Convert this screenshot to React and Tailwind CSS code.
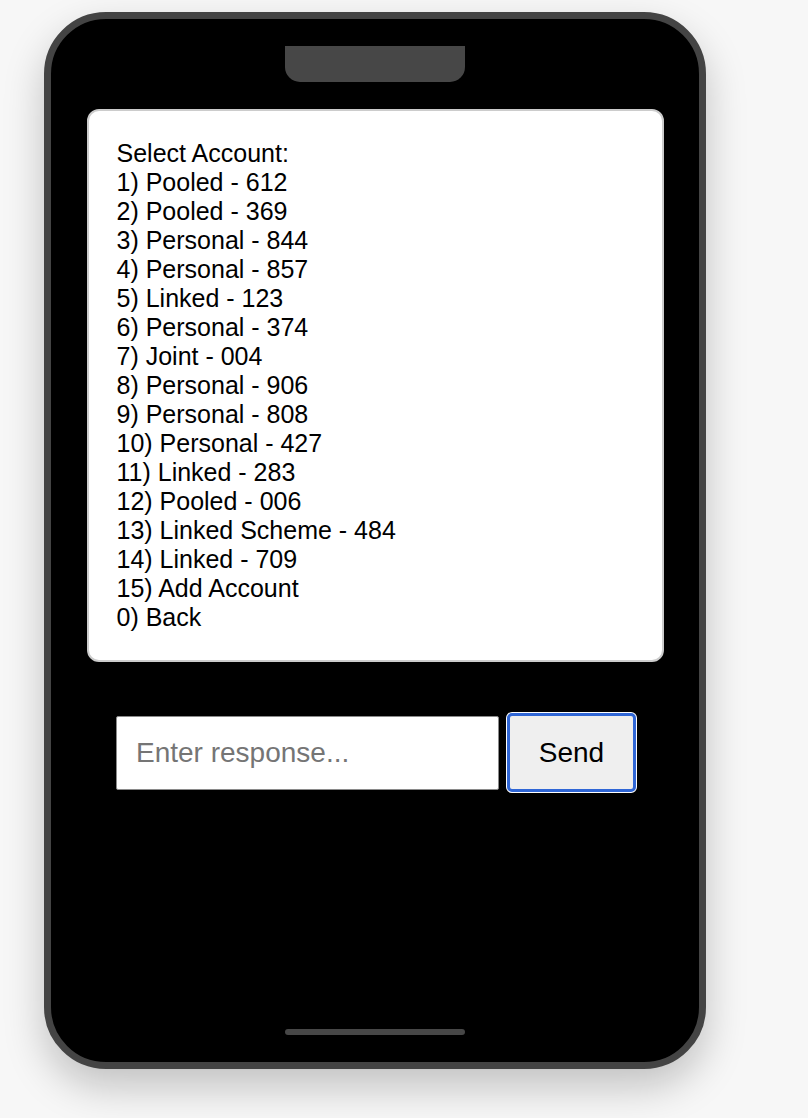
export default function App() {
  const lines = [
    "Select Account:",
    "1) Pooled - 612",
    "2) Pooled - 369",
    "3) Personal - 844",
    "4) Personal - 857",
    "5) Linked - 123",
    "6) Personal - 374",
    "7) Joint - 004",
    "8) Personal - 906",
    "9) Personal - 808",
    "10) Personal - 427",
    "11) Linked - 283",
    "12) Pooled - 006",
    "13) Linked Scheme - 484",
    "14) Linked - 709",
    "15) Add Account",
    "0) Back",
  ];
  return (
    <div
      className="min-h-[1118px] w-full bg-[#f7f7f7] pl-[44px] pt-[12px]"
      style={{ fontFamily: '"Liberation Sans", Arial, sans-serif' }}
    >
      <div className="flex h-[1057px] w-[662px] flex-col items-center rounded-[62px] border-[7px] border-[#444444] bg-black shadow-[0_18px_40px_rgba(0,0,0,0.22)]">
        <div className="mt-[27px] h-[36px] w-[180px] rounded-b-[15px] bg-[#474747]" />
        <div className="mt-[27px] w-[577px] rounded-[12px] border-2 border-[#cccccc] bg-white px-[28px] py-[28px] text-[25px] leading-[29px] text-black">
          {lines.map((l) => (
            <div key={l}>{l}</div>
          ))}
        </div>
        <div className="mt-[51px] ml-[2px] flex items-center gap-[8px]">
          <input
            type="text"
            placeholder="Enter response..."
            className="h-[74px] w-[383px] rounded-[2px] border border-[#8a8a8a] bg-white px-[19px] text-[28px] text-black outline-none placeholder:text-[#757575]"
            style={{ fontFamily: '"Liberation Sans", Arial, sans-serif' }}
          />
          <button
            className="h-[79px] w-[129px] rounded-[5px] border-[3px] border-[#2f66d6] bg-[#efefef] text-[28px] text-black shadow-[0_0_0_1px_#ffffff]"
            style={{ fontFamily: '"Liberation Sans", Arial, sans-serif' }}
          >
            Send
          </button>
        </div>
        <div className="flex-1" />
        <div className="mb-[27px] h-[6px] w-[180px] rounded-full bg-[#474747]" />
      </div>
    </div>
  );
}
